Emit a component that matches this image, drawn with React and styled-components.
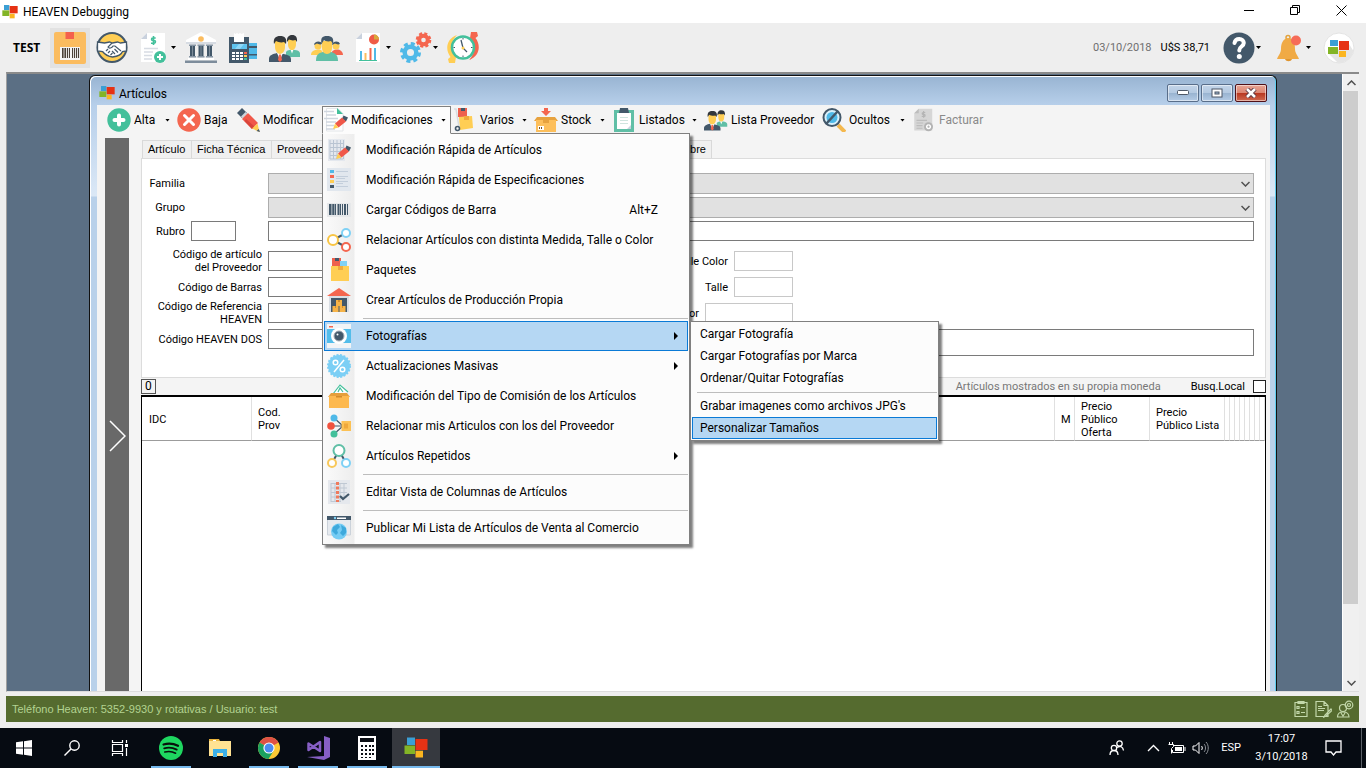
import React from "react";
import styled, { createGlobalStyle, css } from "styled-components";

const ui = `Roboto, "Open Sans", sans-serif`;
const classic = `Roboto, "Liberation Sans", sans-serif`;

const Global = createGlobalStyle`
  *, *::before, *::after { box-sizing: border-box; }
  body { margin: 0; background: #eeeeee; color: #000; font: 12px/16px ${ui}; }
  button, input, select { font: inherit; color: inherit; margin: 0; border-radius: 0; }
  ul { list-style: none; margin: 0; padding: 0; }
  svg { display: block; flex: none; }
`;

/* ---------- icons ---------- */

const C = {
  navy: "#43586a", yellow: "#ffce54", orange: "#fbbc5f", red: "#f4664f", green: "#43c09b",
  teal: "#60bfa6", blue: "#4fb9e8", sky: "#7fd1f5", paper: "#ffffff", grey: "#d7dce3",
};

function Heaven({ size = 24 }) {
  return (
    <svg width={size} height={size} viewBox="0 0 24 24" aria-hidden="true">
      <path fill="#3b9fd4" d="M3 1.500h8V9H3z" />
      <path fill="#e63214" d="M11.500 3H23.500v11h-12z" />
      <path fill="#83b526" d="M.500 9.500H11V18H.500z" />
      <path fill="#fbb520" d="M11.500 14.700H19V21.500h-7.500z" />
    </svg>
  );
}

function Icon({ size = 24, box = 24, children }) {
  return (
    <svg width={size} height={size} viewBox={`0 0 ${box} ${box}`} fill="none" aria-hidden="true">
      {children}
    </svg>
  );
}

const PackageIcon = () => (
  <Icon size={32} box={32}>
    <rect width="32" height="32" rx="2" fill={C.orange} />
    <path fill="#f4604c" d="M11.500 0H20v7h-8.500z" />
    <path fill="#f5f5f5" d="M6 15h20v13H6z" />
    <path stroke="#4b4138" strokeWidth="1" d="M8.500 16v10M11.500 16v10M15.500 16v10M18.500 16v10M22.500 16v10" />
    <path stroke="#4b4138" strokeWidth="1.200" d="M10 16v10M13.500 16v10M20.500 16v10M24.500 16v10" />
  </Icon>
);
const HandshakeIcon = () => (
  <Icon size={32} box={32}>
    <circle cx="16" cy="15.500" r="14.500" fill={C.yellow} stroke={C.navy} strokeWidth="2" />
    <path fill="#fff" stroke={C.navy} strokeWidth="1.300" d="M1.500 10l7 1 5-1 3 1 5-1 3 1 6-1v9l-4 .500c-1 3-6 5-10 5.500-4-.500-8-3-10-5.500l-5-.500z" />
    <path stroke={C.navy} strokeWidth="1.200" d="M16 11l-4 4c1 2 4 1 5-1l2 0 6 5M10 19l2-2M12 21l2-2M14.500 23l2-2M19 22l-3-3M22 20.500l-3.500-3.500" />
  </Icon>
);
const DocBase = ({ grey }) => (
  <>
    <path fill={grey ? "#d6d6d6" : "#fff"} d="M9 1h18v29H3V7z" />
    <path fill={grey ? "#bdbdbd" : "#c9d1dd"} d="M9 1v6H3z" />
  </>
);
const InvoiceBody = ({ grey }) => (
  <>
    <DocBase grey={grey} />
    <path stroke={grey ? "#b5b5b5" : C.green} strokeWidth="1.600" d="M15.500 4v9M17.700 6h-3c-1.500 0-1.500 2.500 0 2.500h1.500c1.700 0 1.700 2.700 0 2.700H13" />
    <path stroke={grey ? "#bcbcbc" : C.grey} strokeWidth="1.500" d="M6 16.500h14M6 20h9M6 23.500h8M6 27h8" />
    <circle cx="22" cy="25" r="6" fill={grey ? "#b3b3b3" : C.green} />
    <path stroke="#fff" strokeWidth="2" d={grey ? "M22 22.500a2.500 2.500 0 1 0 .1 0" : "M22 22v6M19 25h6"} />
  </>
);
const InvoiceIcon = () => <Icon size={32} box={32}><InvoiceBody /></Icon>;
const InvoiceGreyIcon = () => <Icon size={24} box={32}><InvoiceBody grey /></Icon>;
const BankIcon = () => (
  <Icon size={32} box={32}>
    <path fill="#fff" d="M16 0l15 8v4H1V8z" />
    <path fill={C.grey} d="M1 10h30v2H1z" />
    <circle cx="16" cy="7" r="2.800" fill={C.orange} />
    <path fill={C.navy} d="M5 13h5v12H5zM13.500 13h5v12h-5zM22 13h5v12h-5z" />
    <path stroke="#7c8b99" d="M7.500 14v11M16 14v11M24.500 14v11" />
    <path fill="#8796a5" d="M4 12.500h7V14H4zM12.500 12.500h7V14h-7zM21 12.500h7V14h-7zM4 24h7v1.500H4zM12.500 24h7v1.500h-7zM21 24h7v1.500h-7z" />
    <path fill="#fff" d="M3 26h26v2H3z" />
    <path fill="#7d8c9b" d="M0 28.500h32V31H0z" />
  </Icon>
);
const PosIcon = () => (
  <Icon size={32} box={32}>
    <path fill={C.blue} d="M20 11h10v16H20z" />
    <path fill={C.navy} d="M20 14h10v2H20zM20 22h10v1.500H20z" />
    <path fill={C.navy} d="M2 5h20v26H2z" />
    <path fill="#fff" d="M7 1l1.500 1L10 1l1.500 1L13 1l1.500 1L17 1v9H7z" />
    <path fill="#5fc3ee" d="M5 12h15v5H5z" />
    <path fill="#8fd8f7" d="M12 12h5l-4 5H8z" />
    <path fill="#fff" d="M5 20h3v2H5zM9 20h3v2H9zM13 20h3v2h-3zM5 23h3v2H5zM9 23h3v2H9zM13 23h3v2h-3zM5 26h3v2H5zM9 26h3v2H9zM13 26h3v2h-3z" />
    <path fill={C.red} d="M17 20h3v2h-3z" /><path fill={C.yellow} d="M17 23h3v2h-3z" /><path fill={C.green} d="M17 26h3v2h-3z" />
  </Icon>
);
const PeopleBody = () => (
  <>
    <path fill={C.teal} d="M17 25v-5c1-2 4-2 6-2.500 4 .500 8 1 8 4V25H17z" />
    <path fill="#fff" d="M21.500 17.500h3l-1.500 4z" />
    <path fill={C.yellow} d="M19 7h8v5c0 4-2 6-4 6s-4-2-4-6z" />
    <path fill="#33373c" d="M18 10c-.500-5 2-7 5-7 4 0 5.500 2.500 5 7l-1.500-2c-3 1-5 0-6.500-.500z" />
    <path fill={C.navy} d="M0 30v-3c0-4 4-5 8-6 5 1 14 1 14 6v3z" />
    <path fill="#fff" d="M8 21h6l-3 7z" />
    <path fill={C.red} d="M10 22.500h2l1 5.500-2 2-2-2z" />
    <path fill={C.yellow} d="M6 9h10v6c0 4-2.500 7-5 7s-5-3-5-7z" />
    <path fill="#33373c" d="M5 12C4 6 7 4 11 4c5 0 7 2.500 6 8l-2-2c-3 1-6 0-8-1z" />
  </>
);
const PeopleIcon = ({ size = 32 }) => <Icon size={size} box={32}><PeopleBody /></Icon>;
const TeamIcon = () => (
  <Icon size={32} box={32}>
    <path fill={C.yellow} d="M0 23c0-4 3-5 7-5.500 4 0 5 2 5 5.500z" />
    <circle cx="7" cy="14" r="3.500" fill={C.yellow} /><path fill={C.navy} d="M3 13c0-4 7-5 8-1-2 1-4 0-5-.500z" />
    <path fill={C.red} d="M20 23c0-4 3-5.500 6-5.500s6 2 6 5.500z" />
    <circle cx="25" cy="14" r="3.500" fill={C.yellow} /><path fill={C.navy} d="M21 13c0-4 7-5 8-1-2 1-4 0-5-.500z" />
    <path fill={C.teal} d="M5 29c0-6 2-8 7-9h8c5 1 7 4 7 9z" />
    <path fill={C.yellow} d="M11 9h10v7c0 3-2 6-5 6s-5-3-5-6z" />
    <path fill={C.navy} d="M10.500 12C9.500 6 11 4 16 4s7 2 6 8l-2-3c-3 1-6 0-7-1z" />
  </Icon>
);
const ReportIcon = () => (
  <Icon size={32} box={32}>
    <DocBase />
    <circle cx="21" cy="7.500" r="5" fill="#ef5b47" /><path fill="#d8a93b" d="M21 7.500v-5a5 5 0 0 1 5 5z" />
    <path stroke={C.blue} strokeWidth="2" d="M8 19v9M22 16v12" />
    <path stroke={C.orange} strokeWidth="2" d="M12.500 21v7" /><path stroke={C.red} strokeWidth="2" d="M17.500 16v12" />
    <path stroke={C.green} strokeWidth="1" d="M6 28.500h18" />
  </Icon>
);
const GearsIcon = () => (
  <Icon size={32} box={32}>
    <circle cx="10.500" cy="20.500" r="8.500" stroke={C.blue} strokeWidth="4" strokeDasharray="3.800 2.875" />
    <circle cx="10.500" cy="20.500" r="5.800" stroke={C.blue} strokeWidth="4.500" />
    <circle cx="23.500" cy="8" r="6.300" stroke={C.red} strokeWidth="3" strokeDasharray="2.900 2.048" />
    <circle cx="23.500" cy="8" r="4.300" stroke={C.red} strokeWidth="4" />
  </Icon>
);
const ClockIcon = () => (
  <Icon size={32} box={32}>
    <path fill={C.yellow} d="M10 3C-1 7-2 18 3.500 25L1 27l1 4h6l1-6-2-3C3 15 5 8 10 3z" />
    <path fill={C.red} d="M22 28c11-4 12-15 6.500-22L31 4l-1-4h-6l-1 6 2 3c4 7 2 14-3 19z" />
    <circle cx="16" cy="15.500" r="11" fill="#fff" stroke={C.green} strokeWidth="2.500" />
    <path stroke={C.navy} strokeWidth="1.300" d="M14 8l2 8 4 4" /><circle cx="16" cy="16" r="1.500" fill={C.yellow} />
    <path stroke={C.navy} strokeWidth="1" d="M16 6v1.500M16 23.500V25M6.500 15.500H8M24 15.500h1.500" />
  </Icon>
);
const HelpIcon = () => (
  <Icon size={32} box={32}>
    <circle cx="16" cy="16" r="15.500" fill={C.navy} />
    <path stroke="#fff" strokeWidth="4" strokeLinecap="round" strokeLinejoin="round" d="M11.500 11c.500-3 2.500-4 4.800-4 2.700 0 4.500 1.700 4.500 4 0 3.500-4.500 3.500-4.500 7v.500" />
    <circle cx="16.300" cy="24.500" r="2.500" fill="#fff" />
  </Icon>
);
const BellIcon = () => (
  <Icon size={32} box={32}>
    <circle cx="15" cy="5.500" r="2" stroke="#e2a33e" strokeWidth="1.500" />
    <path fill="#f0aa45" d="M15 6c6 1 7 5 7 11 0 4 2 5 4 10H4c2-5 4-6 4-10 0-6 2-10 7-11z" />
    <path fill="#e0952f" d="M12 27h7c-1 3-6 3-7 0z" /><circle cx="23" cy="8.500" r="5" fill="#f66c58" />
  </Icon>
);
const LogoBadge = () => (
  <Icon size={32} box={32}>
    <circle cx="16" cy="16" r="15" fill="#fff" stroke="#e4e4e4" />
    <path fill="#e5e5e5" d="M6 22l9 9c8 0 14-5 15.500-12L26 12z" />
    <path fill="#3b9fd4" d="M7 8h8v6H7z" /><path fill="#e63214" d="M16 9h10v9H16z" />
    <path fill="#83b526" d="M5 15h10v7H5z" /><path fill="#fbb520" d="M16 19h7v6h-7z" />
  </Icon>
);

const AddIcon = () => (
  <Icon><circle cx="12" cy="12" r="11.700" fill={C.green} /><path stroke="#fff" strokeWidth="4" strokeLinecap="round" d="M12 7.500v9M7.500 12h9" /></Icon>
);
const RemoveIcon = () => (
  <Icon><circle cx="12" cy="12" r="11.700" fill={C.red} /><path stroke="#fff" strokeWidth="3" strokeLinecap="round" d="M7.500 7.500l9 9M16.500 7.500l-9 9" /></Icon>
);
const PencilIcon = () => (
  <Icon>
    <path fill={C.navy} d="M1 5l5-5 5 5-5 5z" /><path fill="#ccd3da" d="M5 8.500l4.500-4.500 2 2L7 10.500z" />
    <path fill="#f0584a" d="M6 11L12 5l10 10-6 6z" /><path fill="#d9453b" d="M8.500 13l1.500-2 9 8-3 2z" />
    <path fill={C.yellow} d="M16 20.500l5.500-5L23.500 24z" /><path fill={C.navy} d="M20.500 23l2.300-2 1.200 3z" />
  </Icon>
);
const MiniPencil = () => (
  <>
    <path fill={C.navy} d="M19.500 7.500l4.500 2-2 4-4-2.500z" /><path fill="#f0584a" d="M18 9.500l4 4-7.500 6-3.500-4z" />
    <path fill={C.yellow} d="M11 15.500l3.500 4L9 21z" />
  </>
);
const EditDocIcon = () => (
  <Icon>
    <path fill="#fff" stroke="#e2e5e8" d="M2.500 .500H14l5 5V23H2.500z" />
    <path fill={C.green} d="M13 0l6 6h-6z" />
    <path stroke="#cfd6df" strokeWidth="1.500" d="M0 3.500h10M2 7h10M0 10.500h14M2 14h10M2 17.500h8M2 21h9" /><MiniPencil />
  </Icon>
);
const BoxesIcon = ({ cart }) => (
  <Icon>
    <path fill="#ee604d" d="M5 0h9v9H5z" /><path fill={C.navy} d="M8 0h4v3H8z" />
    {!cart && <path fill={C.sky} d="M13 3h7v7h-7z" />}
    <path fill={C.yellow} d={cart ? "M6 9l13-1 1 12-13 2z" : "M4 8h18v15H4z"} /><path fill="#efaa3d" d="M11 8h5v4h-5z" />
    {cart && <><path stroke="#d7dce0" strokeWidth="1.500" d="M1 1h2l3 18" /><circle cx="4.500" cy="20.500" r="2" stroke={C.navy} strokeWidth="1.600" /></>}
  </Icon>
);
const StockIcon = () => (
  <Icon>
    <path fill={C.red} d="M10 0h4v3h3l-5 5-5-5h3z" /><path fill="#e7a23e" d="M3 9h18l3 4H0z" />
    <path fill="#fdbf5b" d="M2 12h20v12H2z" /><path fill="#e7a23e" d="M9 12h6v3H9z" />
    <path fill="#fff" d="M4 18h6v4H4z" /><path stroke="#735020" d="M5.500 19v2M7.500 19v2" />
  </Icon>
);
const ClipboardIcon = () => (
  <Icon>
    <path fill={C.teal} d="M2 2h20v22H2z" /><path fill="#fff" d="M5 5h14v16H5z" /><path fill={C.navy} d="M8 0h8l1 5H7z" />
    <path stroke="#cfe5df" d="M8 9.500h8M8 12.500h8M8 15.500h8" /><path fill="#c9d1dd" d="M15 21l4-4v4z" />
  </Icon>
);
const HiddenIcon = () => (
  <Icon>
    <path stroke="#f4b84e" strokeWidth="4" d="M16 17l7 7" />
    <circle cx="10" cy="9.500" r="8.500" fill="#d8f0fb" stroke={C.navy} strokeWidth="2" /><circle cx="10" cy="9.500" r="5.500" fill={C.blue} />
    <path stroke={C.navy} strokeWidth="2.500" d="M4 16L16 3" />
  </Icon>
);

const GridPencilIcon = () => (
  <Icon>
    <path fill="#e4e8ee" d="M1 1h17v22H1z" />
    <path stroke="#b9c4d2" d="M3 5.500h13M3 9.500h13M3 13.500h13M3 17.500h13M3 2v19M6.500 2v19M10 2v19M13.500 2v19M16.500 2v19M3 21h13" /><MiniPencil />
  </Icon>
);
const SpecsIcon = () => (
  <Icon>
    <path fill="#e1e7ee" d="M0 0h24v23H0z" />
    <path fill={C.blue} d="M3 2h4v3H3z" /><path fill={C.red} d="M3 7h4v3H3z" /><path fill={C.yellow} d="M3 12h4v3H3z" /><path fill={C.navy} d="M3 17h4v3H3z" />
    <path stroke="#c3cedb" d="M9 3.500h12M9 8.500h12M9 10.500h9M9 13.500h12M9 15.500h7M9 18.500h12" />
  </Icon>
);
const BarcodeIcon = () => (
  <Icon>
    <path fill="#e6e8ea" d="M0 5h24v14H0z" />
    <path stroke={C.navy} strokeWidth="2" d="M3 6v11M6.500 6v11M11.500 6v11M18 6v11" /><path stroke={C.navy} d="M5 6v11M8.500 6v11M13.500 6v11M15.500 6v11M20.500 6v11" />
  </Icon>
);
const Nodes = ({ a, b, c, ring }) => (
  <Icon>
    <path stroke={C.navy} strokeWidth="2" d={`M${a[0]} ${a[1]}L${b[0]} ${b[1]}M${a[0]} ${a[1]}L${c[0]} ${c[1]}`} />
    {[a, b, c].map((n, i) => <circle key={i} cx={n[0]} cy={n[1]} r={n[3]} fill={n[2] && "#fff"} stroke={n[2]} strokeWidth={ring} />)}
  </Icon>
);
const RelateIcon = () => <Nodes ring="2" a={[6, 12, "#f8c544", 5]} b={[19, 5, C.sky, 4]} c={[19, 19, C.red, 4]} />;
const RepeatIcon = () => <Nodes ring="2" a={[12, 6.5, C.teal, 5.5]} b={[5, 19, "#f8c85a", 4]} c={[19, 19, C.sky, 4]} />;
const WarehouseIcon = () => (
  <Icon>
    <path fill="#d9dee4" d="M2 8h20v16H2z" /><path fill={C.navy} d="M4 10h16v14H4z" /><path fill={C.red} d="M12 0l12 8H0z" />
    <path fill="#f6b348" d="M9 12h6v6H9zM5.500 18h6v6h-6zM12.500 18h6v6h-6z" /><path fill="#d28e2c" d="M11 12h2v2h-2zM8 18h1v2H8zM15 18h1v2h-1z" />
  </Icon>
);
const CameraIcon = () => (
  <Icon>
    <path fill="#f2f4f6" d="M0 0h24v24H0z" /><path fill="#53bdea" d="M0 5h24v14H0z" /><path fill={C.red} d="M2 2h4v1.500H2z" />
    <circle cx="12" cy="12" r="8" fill="#fff" /><circle cx="12" cy="12" r="5" fill={C.navy} stroke="#a3acb5" strokeWidth="1" /><circle cx="10.500" cy="10.500" r="1" fill="#fff" />
  </Icon>
);
const PercentIcon = () => (
  <Icon>
    <circle cx="12" cy="12" r="11" fill="#7ccff5" stroke="#7ccff5" strokeWidth="2" strokeDasharray="2 1.500" />
    <path stroke="#fff" strokeWidth="1.500" d="M17 6L7 18" /><circle cx="8.500" cy="8.500" r="2.300" stroke="#fff" strokeWidth="1.500" /><circle cx="15.500" cy="15.500" r="2.300" stroke="#fff" strokeWidth="1.500" />
  </Icon>
);
const CommissionIcon = () => (
  <Icon>
    <path fill="#fff" stroke={C.green} strokeWidth="1.200" d="M6 10L13 1l8 7" /><path stroke={C.green} strokeWidth="1.200" d="M11 8l2-4 3 4" />
    <path fill="#e59f3b" d="M4 9h16l3 4H1z" /><path fill="#fdb94f" d="M2 12h20v12H2z" /><path fill="#d38b2a" d="M9 12h6v1.500H9z" />
  </Icon>
);
const SupplierIcon = () => (
  <Icon>
    <path stroke={C.navy} strokeWidth="1.200" d="M7 4l9 8H4M16 12L7 20" /><circle cx="7" cy="4" r="3.500" fill={C.blue} />
    <circle cx="4" cy="12" r="3.800" fill="#f0523f" /><circle cx="7" cy="20" r="3.500" fill={C.green} /><path fill="#fcc154" d="M14.500 7H24v10h-9.500z" /><path fill="#efa83b" d="M17 9.500h4v5h-4z" />
  </Icon>
);
const ColumnsIcon = () => (
  <Icon>
    <path fill="#e5e8ed" d="M1 0h22v24H1z" /><path stroke="#bfc8d3" d="M4 3.500h16M4 8h16M4 12.500h16M4 17h16M4 21.500h10M4 3v19M8 3v19M13 3v19M17 3v15" />
    <path stroke="#f07a5c" strokeWidth="3" strokeDasharray="3 1.500" d="M10.500 2v20" /><path stroke={C.navy} strokeWidth="2.200" d="M13 16l3 3 6-5" />
  </Icon>
);
const PublishIcon = () => (
  <Icon>
    <path fill="#e6eaef" stroke="#cbd2da" d="M.500 1h23v18H.500z" /><path fill={C.navy} d="M0 0h24v4H0z" /><path fill="#fff" d="M10 1.500h9V3h-9z" /><circle cx="8" cy="2" r="1.200" fill={C.sky} />
    <circle cx="12" cy="15.500" r="8" fill="#75ccf4" /><path fill="#3ea9dc" d="M6 11l5-3 2 3-3 3 1 3-2 2-4-4zM14 9l5 3v5l-3 3-3-3 2-3z" />
  </Icon>
);

const statusStroke = { stroke: "#c3d8ab", strokeWidth: 1.2 };
const StatusListIcon = () => <Icon size={18} box={18}><path {...statusStroke} d="M3 2.500h12v14H3zM6 1.500h6v2H6zM5 6.500h2v2H5zM5 11.500h2v2H5zM9 7.500h4M9 12.500h4" /></Icon>;
const StatusEditIcon = () => <Icon size={18} box={18}><path {...statusStroke} d="M2 1.500h8l4 4v11H2zM10 1.500v4h4M4 6.500h4M4 8.500h7M4 10.500h6M17 9l-6 6-1 2 2-1 6-5.500z" /></Icon>;
const StatusUserIcon = () => <Icon size={18} box={18}><circle cx="7" cy="8" r="3.500" {...statusStroke} /><circle cx="13" cy="5" r="3.800" {...statusStroke} /><circle cx="13" cy="5" r="1.500" {...statusStroke} /><path {...statusStroke} d="M1.500 17c0-4 2-5 5.500-5s6 1 6 5zM5 13l2 3 2-3" /></Icon>;

/* ---------- outer shell ---------- */

const Shell = styled.div`
  display: flex; flex-direction: column; min-height: 100vh; background: #eeeeee;
`;
const TitleBar = styled.header`
  display: flex; align-items: center; height: 23px; background: #fff; padding: 0 2px;
`;
const TitleText = styled.h1`
  flex: 1; margin: 0; padding-left: 5px; font: 400 12px/16px ${ui};
`;
const SystemButton = styled.button`
  display: flex; align-items: center; justify-content: center; width: 46px; height: 20px; padding: 0; border: 0; background: none; align-self: flex-start;
`;
const MainBar = styled.nav`
  display: flex; align-items: center; gap: 2px; height: 49px; padding: 0 7px 0 13px;
`;
const Company = styled.strong`
  width: 35px; font: 700 12px/16px "Open Sans", sans-serif;
`;
const AppButton = styled.button`
  display: flex; align-items: center; height: 40px; border: 0;
  gap: ${(p) => (p.$drop ? 1 : 0)}px; padding: 4px ${(p) => (p.$drop ? 3 : 4)}px 4px 4px;
  background: ${(p) => (p.$active ? "#e2e2e2" : "transparent")};
`;
const Caret = styled.span`
  width: 5px; height: 3px; background: #000; clip-path: polygon(0 0, 100% 0, 50% 100%);
`;
const MainRight = styled.div`
  display: flex; align-items: center; gap: 5px; margin-left: auto;
`;
const Readout = styled.span`
  margin-right: 4px; white-space: nowrap; font: 11px/16px ${ui}; color: ${(p) => (p.$muted ? "#6f6f6f" : "#000")};
`;

const Desktop = styled.main`
  display: flex; flex: 1; min-height: 0; margin: 0 7px 0 6px; background: #5b6f84;
  border-left: 1px solid #a0a0a0; border-top: 2px solid #8a8a8a; border-bottom: 1px solid #dcdcdc;
`;
const WindowSlot = styled.div`
  display: flex; flex: 1; min-width: 0; padding: 1px 65px 0 82px;
`;
const ScrollTrack = styled.div`
  display: flex; flex-direction: column; width: 17px; background: #f0f0f0; border-left: 1px solid #fff;
`;
const ScrollButton = styled.button`
  display: flex; align-items: center; justify-content: center; height: 17px; padding: 0; border: 0; background: #f0f0f0;
`;
const ScrollThumb = styled.div`
  flex: 88 1 0; background: #cdcdcd; margin-right: 1px;
`;
const ScrollRest = styled.div` flex: 12 1 0; `;

/* ---------- Artículos window ---------- */

const Window = styled.section`
  display: flex; flex-direction: column; flex: 1; min-width: 0;
  border: solid #111; border-width: 1px 1px 0 1px; border-radius: 6px 6px 0 0;
  background: linear-gradient(#98b4d2 0, #b7cfea 29px, #dbe8f6 120px, #b9d1ea 121px);
  box-shadow: inset 1px 1px #fff, inset -1px 0 #5fcdf0; padding: 0 6px 0 7px;
`;
const WindowTitle = styled.div`
  display: flex; align-items: center; gap: 2px; height: 29px; padding: 4px 3px 0 2px;
`;
const WindowName = styled.h2`
  flex: 1; margin: 0; padding: 2px 0 0 2px; font: 400 12px/16px ${ui};
`;
const FrameButton = styled.button`
  display: flex; align-items: center; justify-content: center; width: 32px; height: 18px; padding: 0;
  border: 1px solid ${(p) => (p.$close ? "#4f1018" : "#596e8a")}; border-radius: 2px;
  box-shadow: inset 0 0 0 1px rgba(255, 255, 255, 0.5);
  background: ${(p) => (p.$close
    ? "linear-gradient(#e8a595 0, #dc8672 48%, #b8361f 50%, #cf6a50 100%)"
    : "linear-gradient(#c3d5e9 0, #b4c9e1 48%, #98b3d0 50%, #b4cbe5 100%)")};
`;
const WindowBody = styled.div`
  display: flex; flex-direction: column; flex: 1; background: #f4f4f4; min-width: 0;
`;
const ToolStrip = styled.div`
  display: flex; height: 33px; padding: 1px 0 0 8px; background: #f4f4f4;
`;
const ToolSlot = styled.div`
  position: relative; flex: none; width: ${(p) => p.$width}px;
`;
const ToolButton = styled.button`
  display: flex; align-items: center; gap: 3px; width: 100%; height: 28px; padding: 0 4px 0 1px; white-space: nowrap;
  border: 1px solid transparent; background: transparent; text-align: left; font: 12px/16px ${ui};
  color: ${(p) => (p.disabled ? "#8a8a8a" : "#000")};
  ${(p) => p.$open && css`
    position: relative; z-index: 3; background: #fcfcfc; border-color: #808080 #808080 #fcfcfc;
  `}
`;
const ToolLabel = styled.span` flex: 1; `;

const Menu = styled.ul`
  position: absolute; z-index: 2; top: ${(p) => (p.$sub ? "0" : "27px")}; left: ${(p) => (p.$sub ? "366px" : "0")};
  width: ${(p) => (p.$sub ? 249 : 368)}px; padding: 1px;
  border: 1px solid #808080; box-shadow: 3px 3px 2px rgba(0, 0, 0, 0.5);
  background: ${(p) => (p.$sub ? "#fcfcfc" : "linear-gradient(90deg, #fafafa 2px, #ededed 31px, #fcfcfc 32px)")};
`;
const MenuRow = styled.li` position: relative; `;
const MenuItem = styled.button`
  display: flex; align-items: center; width: 100%; text-align: left; white-space: nowrap; font: 12px/16px ${ui};
  height: ${(p) => (p.$compact ? 22 : 30)}px; padding: 0 9px 0 ${(p) => (p.$compact ? 7 : 2)}px; gap: 15px;
  border: 1px solid ${(p) => (p.$active ? "#0a7ad6" : "transparent")};
  background: ${(p) => (p.$active ? "#b5d7f3" : "transparent")};
`;
const MenuText = styled.span` flex: 1; `;
const Shortcut = styled.kbd` margin-right: 20px; font: inherit; `;
const SubArrow = styled.span`
  width: 4px; height: 8px; background: #000; clip-path: polygon(0 0, 100% 50%, 0 100%);
`;
const Separator = styled.li`
  height: 6px; padding: 3px 0 2px ${(p) => (p.$compact ? 5 : 39)}px;
  &::after { content: ""; display: block; height: 1px; background: #bdbdbd; }
`;

const Workspace = styled.div`
  display: flex; flex: 1; padding: 0 4px 0 8px; gap: 12px;
`;
const SideHandle = styled.button`
  display: flex; align-items: center; justify-content: center; width: 24px; padding: 42px 0 0; border: 0; background: #696969;
`;
const Editor = styled.div`
  display: flex; flex: 1; flex-direction: column; min-width: 0; font: 11px/13px ${classic};
`;
const Tabs = styled.div` display: flex; height: 20px; padding: 2px 0 0 1px; `;
const Tab = styled.button`
  height: 18px; padding: 0 5px; white-space: nowrap; background: #f0f0f0; border: solid #d9d9d9; border-width: 1px 1px 0 0;
  font: 11px/13px "Liberation Sans", sans-serif; width: ${(p) => p.$width}px; text-align: ${(p) => (p.$end ? "right" : "left")};
  &:first-child { border-left-width: 1px; }
`;
const Form = styled.form`
  display: flex; flex-direction: column; gap: 3px; height: 220px; padding: 14px 11px 0 0; background: #fff; border: 1px solid #dcdcdc;
`;
const FieldRow = styled.div` display: flex; align-items: center; height: ${(p) => p.$height || 21}px; `;
const ShortLabel = styled.label` width: 43px; margin-right: 6px; text-align: right; `;
const RowSpace = styled.div` width: 77px; display: flex; `;
const PickWrap = styled.div` position: relative; flex: 1; `;
const Pick = styled.select`
  display: block; width: 100%; height: 21px; border: 1px solid #adadad; background: #e1e1e1; appearance: none;
`;
const PickArrow = styled.span` position: absolute; right: 4px; top: 8px; pointer-events: none; `;
const Field = styled.input`
  height: ${(p) => p.$height || 20}px; padding: 0 3px; background: #fff; border: 1px solid ${(p) => (p.$light ? "#c8c8c8" : "#7a7a7a")};
  ${(p) => (p.$width ? css`flex: none; width: ${p.$width}px;` : css`flex: 1; min-width: 0;`)}
`;
const CodeRows = styled.div` display: flex; flex-direction: column; gap: 6px; padding-top: 7px; `;
const CodeRow = styled.div` display: flex; align-items: center; height: 20px; `;
const CodeLabel = styled.label` width: 120px; margin-right: 6px; text-align: right; `;
const Variant = styled.div` display: flex; align-items: center; justify-content: flex-end; gap: 6px; width: 305px; `;
const Notes = styled.div` display: flex; flex: 1; align-self: flex-start; padding-left: 20px; `;

const SummaryRow = styled.div` display: flex; align-items: center; height: 17px; `;
const Count = styled.output` min-width: 14px; height: 15px; padding: 0 3px; border: 1px solid #555; font: 12px/13px ${classic}; `;
const Hint = styled.span` margin: 0 30px 0 auto; color: #777; `;
const Check = styled.label` display: flex; align-items: center; gap: 8px; `;
const Box = styled.input` appearance: none; width: 13px; height: 13px; border: 1px solid #222; background: #fff; `;

const Results = styled.div` flex: 1; background: #fff; border: solid #000; border-width: 2px 1px 0 1px; `;
const Grid = styled.table`
  width: 100%; table-layout: fixed; border-collapse: separate; border-spacing: 0; font: 11px/13px ${classic};
`;
const HeadCell = styled.th`
  width: ${(p) => (p.$width ? `${p.$width}px` : "auto")}; height: 44px; padding: 1px 0 0 ${(p) => (p.$pad ?? 6)}px; font-weight: 400; text-align: left;
  border-right: 1px solid #e0e0e0; border-bottom: 1px solid #9c9c9c;
`;

/* ---------- status bar and taskbar ---------- */

const StatusBar = styled.footer`
  display: flex; align-items: center; gap: 4px; height: 26px; margin: 4px 7px 6px 6px; padding: 0 5px 0 6px; background: #556b2f; color: #b3d391; font: 11px/13px "Liberation Sans", sans-serif;
`;
const StatusText = styled.span` flex: 1; `;
const TaskBar = styled.nav`
  display: flex; height: 40px; background: #060b12; color: #fff;
`;
const TaskButton = styled.button`
  display: flex; align-items: center; justify-content: center; width: 48px; height: 40px; padding: 0; border: 0;
  margin-left: ${(p) => (p.$app ? 1 : 0)}px; background: ${(p) => (p.$active ? "#36393f" : "transparent")};
  ${(p) => p.$running && css`
    background-image: linear-gradient(#76b9ed, #76b9ed); background-repeat: no-repeat;
    background-position: bottom; background-size: ${p.$active ? 48 : 40}px 2px;
  `}
`;
const AppGroup = styled.div` display: flex; margin-left: 2px; `;
const Tray = styled.div` display: flex; align-items: center; margin-left: auto; `;
const TrayButton = styled.button`
  display: flex; align-items: center; justify-content: center; width: ${(p) => p.$width}px; height: 40px; padding: 0; border: 0; background: none;
  font: 11px/18px ${ui};
`;
const Clock = styled.time` display: block; text-align: center; `;
const ShowDesktop = styled.button` width: 5px; height: 40px; margin-left: 14px; padding: 0; border: 0; border-left: 1px solid #5a5f66; background: none; `;

/* ---------- data ---------- */

const mainTools = [
  ["Artículos", PackageIcon, false], ["Clientes", HandshakeIcon, false], ["Facturación", InvoiceIcon, true], ["Bancos", BankIcon, false],
  ["Caja", PosIcon, false], ["Proveedores", PeopleIcon, false], ["Personal", TeamIcon, false], ["Informes", ReportIcon, true],
  ["Configuración", GearsIcon, true], ["Historial", ClockIcon, false],
];

const tools = [
  { label: "Alta", icon: AddIcon, width: 70, drop: true },
  { label: "Baja", icon: RemoveIcon, width: 59 },
  { label: "Modificar", icon: PencilIcon, width: 88 },
  { label: "Modificaciones", icon: EditDocIcon, width: 129, drop: true, open: true },
  { label: "Varios", icon: () => <BoxesIcon cart />, width: 81, drop: true },
  { label: "Stock", icon: StockIcon, width: 78, drop: true },
  { label: "Listados", icon: ClipboardIcon, width: 92, drop: true },
  { label: "Lista Proveedor", icon: () => <PeopleIcon size={24} />, width: 118 },
  { label: "Ocultos", icon: HiddenIcon, width: 90, drop: true },
  { label: "Facturar", icon: InvoiceGreyIcon, width: 80, disabled: true },
];

const menu = [
  { label: "Modificación Rápida de Artículos", icon: GridPencilIcon },
  { label: "Modificación Rápida de Especificaciones", icon: SpecsIcon },
  { label: "Cargar Códigos de Barra", icon: BarcodeIcon, shortcut: "Alt+Z" },
  { label: "Relacionar Artículos con distinta Medida, Talle o Color", icon: RelateIcon },
  { label: "Paquetes", icon: BoxesIcon },
  { label: "Crear Artículos de Producción Propia", icon: WarehouseIcon },
  null,
  { label: "Fotografías", icon: CameraIcon, sub: true, open: true },
  { label: "Actualizaciones Masivas", icon: PercentIcon, sub: true },
  { label: "Modificación del Tipo de Comisión de los Artículos", icon: CommissionIcon },
  { label: "Relacionar mis Articulos con los del Proveedor", icon: SupplierIcon },
  { label: "Artículos Repetidos", icon: RepeatIcon, sub: true },
  null,
  { label: "Editar Vista de Columnas de Artículos", icon: ColumnsIcon },
  null,
  { label: "Publicar Mi Lista de Artículos de Venta al Comercio", icon: PublishIcon },
];

const photoMenu = ["Cargar Fotografía", "Cargar Fotografías por Marca", "Ordenar/Quitar Fotografías", null, "Grabar imagenes como archivos JPG's", "Personalizar Tamaños"];

const Chevron = ({ up }) => (
  <svg width="9" height="6" viewBox="0 0 9 6" fill="none" aria-hidden="true"><path stroke="#505050" strokeWidth="1.500" d={up ? "M.500 5l4-4 4 4" : "M.500 1l4 4 4-4"} /></svg>
);

function PhotoMenu() {
  return (
    <Menu $sub>
      {photoMenu.map((t, i) => t
        ? <MenuRow key={i}><MenuItem type="button" $compact $active={t === "Personalizar Tamaños"}>{t}</MenuItem></MenuRow>
        : <Separator key={i} $compact />)}
    </Menu>
  );
}

function EditMenu() {
  return (
    <Menu>
      {menu.map((m, i) => m ? (
        <MenuRow key={i}>
          <MenuItem type="button" $active={m.open}>
            <m.icon />
            <MenuText>{m.label}</MenuText>
            {m.shortcut && <Shortcut>{m.shortcut}</Shortcut>}
            {m.sub && <SubArrow />}
          </MenuItem>
          {m.open && <PhotoMenu />}
        </MenuRow>
      ) : <Separator key={i} />)}
    </Menu>
  );
}

function ArticleForm() {
  return (
    <Form>
      {["Familia", "Grupo"].map((t) => (
        <FieldRow key={t}>
          <ShortLabel htmlFor={t}>{t}</ShortLabel><RowSpace />
          <PickWrap><Pick id={t}><option> </option></Pick><PickArrow><Chevron /></PickArrow></PickWrap>
        </FieldRow>
      ))}
      <FieldRow $height={20}>
        <ShortLabel htmlFor="rubro">Rubro</ShortLabel>
        <RowSpace><Field id="rubro" $width={45} /></RowSpace>
        <Field aria-label="Descripción" />
      </FieldRow>
      <CodeRows>
        <CodeRow>
          <CodeLabel htmlFor="prov">Código de artículo<br />del Proveedor</CodeLabel><Field id="prov" $width={220} />
          <Variant><label htmlFor="tc">Talle Color</label><Field id="tc" $width={59} $light /></Variant>
        </CodeRow>
        <CodeRow>
          <CodeLabel htmlFor="barras">Código de Barras</CodeLabel><Field id="barras" $width={220} />
          <Variant><label htmlFor="talle">Talle</label><Field id="talle" $width={59} $light /></Variant>
        </CodeRow>
        <CodeRow>
          <CodeLabel htmlFor="ref">Código de Referencia<br />HEAVEN</CodeLabel><Field id="ref" $width={220} />
          <Variant><label htmlFor="color">Color</label><Field id="color" $width={88} $light /></Variant>
        </CodeRow>
        <CodeRow>
          <CodeLabel htmlFor="dos">Código HEAVEN DOS</CodeLabel><Field id="dos" $width={220} />
          <Notes><Field aria-label="Observaciones" $height={27} /></Notes>
        </CodeRow>
      </CodeRows>
    </Form>
  );
}

function ArticlesWindow() {
  return (
    <Window>
      <WindowTitle>
        <Heaven size={16} />
        <WindowName>Artículos</WindowName>
        <FrameButton aria-label="Minimizar"><svg width="12" height="6"><rect x=".5" y=".5" width="11" height="4" rx="1" fill="#fff" stroke="#4d5766" /></svg></FrameButton>
        <FrameButton aria-label="Restaurar"><svg width="12" height="10"><rect x="1" y="1" width="10" height="8" fill="#fff" stroke="#4d5766" /><rect x="4" y="4" width="4" height="2" fill="#9db6d3" stroke="#4d5766" /></svg></FrameButton>
        <FrameButton $close aria-label="Cerrar"><svg width="12" height="10" fill="none"><path d="M2 1l8 8M10 1L2 9" stroke="#5b3a44" strokeWidth="4.500" /><path d="M2 1l8 8M10 1L2 9" stroke="#fff" strokeWidth="2.500" /></svg></FrameButton>
      </WindowTitle>
      <WindowBody>
        <ToolStrip>
          {tools.map((t) => (
            <ToolSlot key={t.label} $width={t.width}>
              <ToolButton $open={t.open} disabled={t.disabled}>
                <t.icon /><ToolLabel>{t.label}</ToolLabel>{t.drop && <Caret />}
              </ToolButton>
              {t.open && <EditMenu />}
            </ToolSlot>
          ))}
        </ToolStrip>
        <Workspace>
          <SideHandle aria-label="Expandir"><svg width="17" height="32" fill="none"><path stroke="#fff" strokeWidth="1.500" d="M1 1l15 15L1 31" /></svg></SideHandle>
          <Editor>
            <Tabs>
              <Tab $width={50}>Artículo</Tab><Tab $width={80}>Ficha Técnica</Tab><Tab $width={75}>Proveedores</Tab><Tab $width={365} $end>Libre</Tab>
            </Tabs>
            <ArticleForm />
            <SummaryRow>
              <Count>0</Count>
              <Hint>Artículos mostrados en su propia moneda</Hint>
              <Check>Busq.Local<Box type="checkbox" /></Check>
            </SummaryRow>
            <Results>
              <Grid>
                <thead><tr>
                  <HeadCell $width={110} $pad={7}>IDC</HeadCell>
                  <HeadCell>Cod.<br />Prov</HeadCell>
                  <HeadCell $width={20}>M</HeadCell>
                  <HeadCell $width={75}>Precio<br />Público<br />Oferta</HeadCell>
                  <HeadCell $width={75}>Precio<br />Público Lista</HeadCell>
                  {[1, 2, 3, 4, 5, 6, 7, 8].map((n) => <HeadCell key={n} $width={5} $pad={0} />)}
                </tr></thead>
              </Grid>
            </Results>
          </Editor>
        </Workspace>
      </WindowBody>
    </Window>
  );
}

function Taskbar() {
  return (
    <TaskBar>
      <TaskButton aria-label="Inicio"><svg width="16" height="16" fill="#fff"><path d="M0 2.300L7 1.300V7.600H0zM8 1.200L16 0v7.600H8zM0 8.500h7v6.300l-7-1zM8 8.500h8V16l-8-1.200z" /></svg></TaskButton>
      <TaskButton aria-label="Buscar"><svg width="16" height="16" fill="none" stroke="#fff" strokeWidth="1.400"><circle cx="10.500" cy="5.500" r="4.700" /><path d="M7 9l-6.500 6.500" /></svg></TaskButton>
      <TaskButton aria-label="Vista de tareas"><svg width="18" height="16" fill="none" stroke="#fff" strokeWidth="1.200"><path d="M1.500 4.500h10v7h-10zM1.500 0v2.500h10V0M1.500 16v-2.500h10V16M15.500 0v3M15.500 8v8" /><path d="M14 4h3v3h-3z" fill="#fff" stroke="none" /></svg></TaskButton>
      <AppGroup>
        <TaskButton $app $running aria-label="Spotify"><Icon><circle cx="12" cy="12" r="12" fill="#1ed760" /><path stroke="#08110c" strokeLinecap="round" strokeWidth="2.200" d="M4.500 8.500c5-1.500 10-1 14.500 1.300" /><path stroke="#08110c" strokeLinecap="round" strokeWidth="1.900" d="M5.200 12.300c4.500-1.300 8.500-.8 12.500 1.300" /><path stroke="#08110c" strokeLinecap="round" strokeWidth="1.600" d="M5.800 16c4-1 7.500-.6 10.800 1.200" /></Icon></TaskButton>
        <TaskButton $app aria-label="Explorador"><Icon><path fill="#e8b33c" d="M1 3h10l1 2H1z" /><path fill="#ffe292" d="M1 5h22v15H1z" /><path fill="#3db0e7" d="M5 21v-8h14v8h-4v-4H9v4z" /><path fill="#fff" d="M5 4h3v1H5z" /></Icon></TaskButton>
        <TaskButton $app $running aria-label="Chrome"><Icon><circle cx="12" cy="12" r="11" fill="#fcc934" /><path fill="#de5145" d="M12 12L2.500 6.500a11 11 0 0 1 19 0z" /><path fill="#1aa15f" d="M12 12L2.500 6.500a11 11 0 0 0 9 16.500l5-8z" /><circle cx="12" cy="12" r="5.600" fill="#fff" /><circle cx="12" cy="12" r="4.500" fill="#4a8bf0" /></Icon></TaskButton>
        <TaskButton $app $running aria-label="Visual Studio"><Icon><path fill="#865fc5" d="M18 0l6 2v19l-6 3L1 21l17-1z" /><path stroke="#865fc5" strokeWidth="2.500" strokeLinejoin="round" d="M2.500 7.500v6.500L14 6v9L2.500 7.500z" /></Icon></TaskButton>
        <TaskButton $app $running aria-label="Calculadora"><Icon><path fill="#fff" d="M3 0h18v24H3z" /><path fill="#0a0e14" d="M5 2h14v4H5zM6 9h2v2H6zM10 9h2v2h-2zM14 9h2v2h-2zM17 9h2v2h-2zM6 13h2v2H6zM10 13h2v2h-2zM14 13h2v2h-2zM17 13h2v2h-2zM6 17h2v2H6zM10 17h2v2h-2zM14 17h2v2h-2zM17 17h2v2h-2zM6 21h2v1H6zM10 21h2v1h-2zM14 21h2v1h-2z" /></Icon></TaskButton>
        <TaskButton $app $running $active aria-label="HEAVEN"><Heaven /></TaskButton>
      </AppGroup>
      <Tray>
        <TrayButton $width={36} aria-label="Contactos"><svg width="16" height="16" fill="none" stroke="#fff" strokeWidth="1.300"><circle cx="5" cy="8" r="2.700" /><path d="M1 15c0-6 8-6 8 0" /><circle cx="10.500" cy="3.500" r="2.700" /><path d="M8 7.500c3-2 6-1 6.500 3" /></svg></TrayButton>
        <TrayButton $width={36} aria-label="Iconos ocultos"><svg width="13" height="8" fill="none"><path stroke="#fff" strokeWidth="1.400" d="M1 7l5.500-5.500L12 7" /></svg></TrayButton>
        <TrayButton $width={12} aria-label="Batería"><svg width="18" height="12" fill="none" stroke="#fff"><path d="M5 3.500h10.500v7H4.500V8M1.500 0v3M4.500 0v3M.500 2.500h5v2l-2 2v5" /><path d="M7 5h7v4H7z" fill="#fff" stroke="none" /><path d="M17 5v4" /></svg></TrayButton>
        <TrayButton $width={35} aria-label="Volumen"><svg width="17" height="14" fill="none" stroke="#fff"><path d="M1 5h2.500L7 1.500v11L3.500 9H1zM9.500 5c1 1 1 3 0 4" /><path stroke="#8b8f95" d="M12 3c2 2 2 6 0 8M14 1c3 3 3 9 0 12" /></svg></TrayButton>
        <TrayButton $width={26}>ESP</TrayButton>
        <TrayButton $width={75}><Clock dateTime="2018-10-03T17:07">17:07<br />3/10/2018</Clock></TrayButton>
        <TrayButton $width={28} aria-label="Notificaciones"><svg width="17" height="16" fill="none"><path stroke="#fff" strokeWidth="1.300" d="M1 1h15v11h-5l-2.500 3L6 12H1z" /></svg></TrayButton>
        <ShowDesktop aria-label="Mostrar escritorio" />
      </Tray>
    </TaskBar>
  );
}

export default function App() {
  return (
    <>
      <Global />
      <Shell>
        <TitleBar>
          <Heaven size={16} />
          <TitleText>HEAVEN Debugging</TitleText>
          <SystemButton aria-label="Minimizar"><svg width="10" height="10"><path stroke="#000" d="M0 5.500h10" /></svg></SystemButton>
          <SystemButton aria-label="Restaurar"><svg width="10" height="10" fill="none" stroke="#000"><path d="M.500 2.500h7v7h-7zM2.500 2.500v-2h7v7h-2" /></svg></SystemButton>
          <SystemButton aria-label="Cerrar"><svg width="11" height="11"><path stroke="#000" d="M.500 .500l10 10M10.500 .500l-10 10" /></svg></SystemButton>
        </TitleBar>
        <MainBar>
          <Company>TEST</Company>
          {mainTools.map(([name, Art, drop], i) => (
            <AppButton key={name} $active={i === 0} $drop={drop} aria-label={name}><Art />{drop && <Caret />}</AppButton>
          ))}
          <MainRight>
            <Readout $muted>03/10/2018</Readout>
            <Readout>U$S 38,71</Readout>
            <AppButton $drop aria-label="Ayuda"><HelpIcon /><Caret /></AppButton>
            <AppButton $drop aria-label="Avisos"><BellIcon /><Caret /></AppButton>
            <AppButton aria-label="HEAVEN"><LogoBadge /></AppButton>
          </MainRight>
        </MainBar>
        <Desktop>
          <WindowSlot><ArticlesWindow /></WindowSlot>
          <ScrollTrack>
            <ScrollButton aria-label="Subir"><Chevron up /></ScrollButton>
            <ScrollThumb /><ScrollRest />
            <ScrollButton aria-label="Bajar"><Chevron /></ScrollButton>
          </ScrollTrack>
        </Desktop>
        <StatusBar>
          <StatusText>Teléfono Heaven: 5352-9930 y rotativas / Usuario: test</StatusText>
          <StatusListIcon /><StatusEditIcon /><StatusUserIcon />
        </StatusBar>
        <Taskbar />
      </Shell>
    </>
  );
}
